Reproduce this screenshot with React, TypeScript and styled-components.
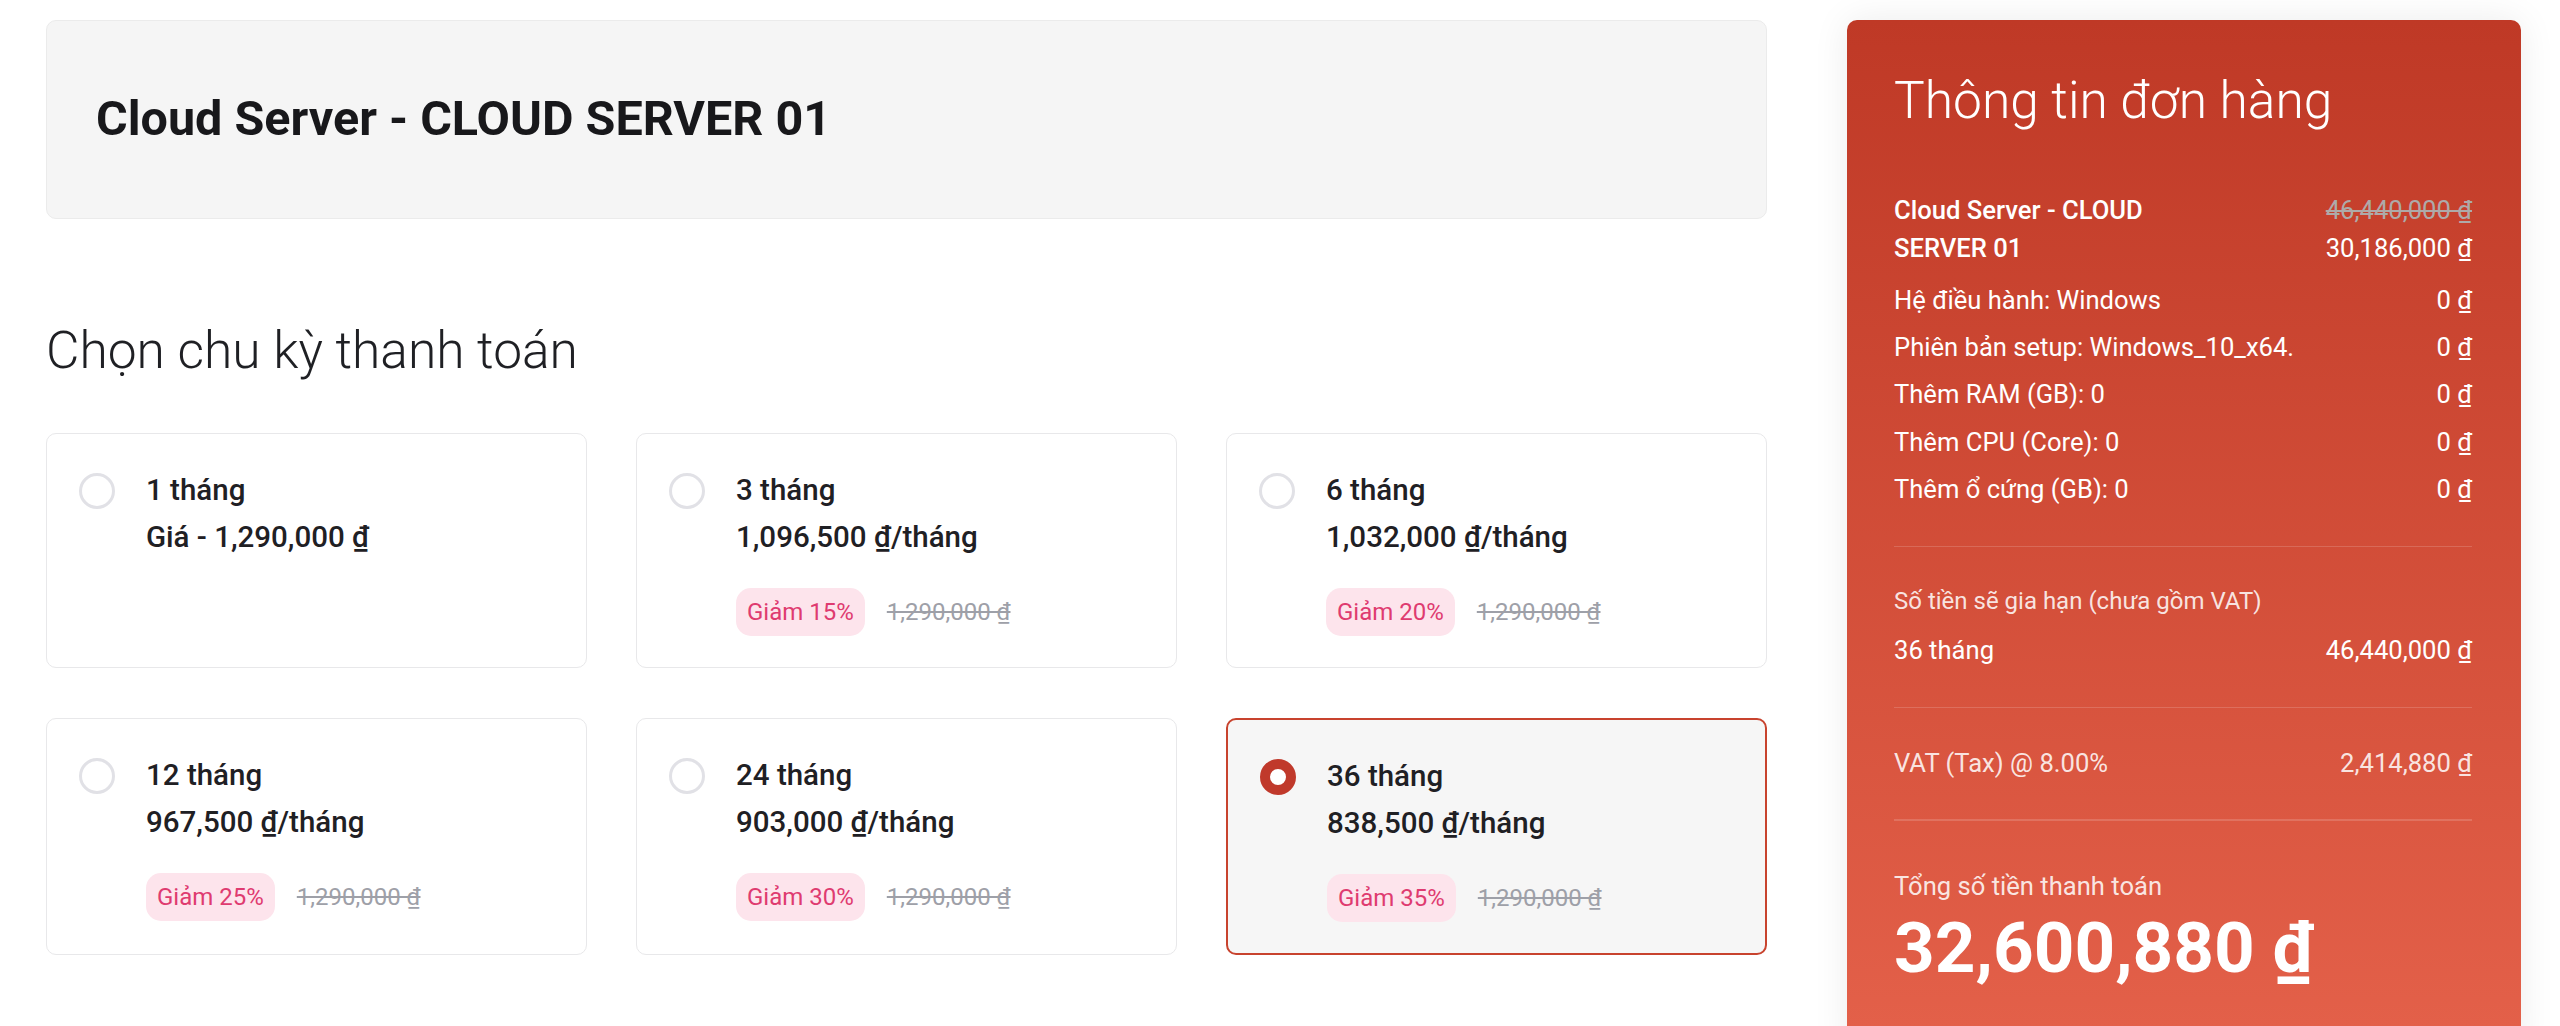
import React, { useState } from 'react';
import styled, { createGlobalStyle } from 'styled-components';

const GlobalStyle = createGlobalStyle`
  * { box-sizing: border-box; }
  body {
    margin: 0;
    background: #ffffff;
    font-family: Roboto, "Liberation Sans", Arial, sans-serif;
    color: #1f2024;
  }
`;

interface CycleOption {
  id: string;
  months: number;
  price: string;
  discount?: string;
}

const OPTIONS: CycleOption[] = [
  { id: '1', months: 1, price: 'Giá - 1,290,000 ₫' },
  { id: '3', months: 3, price: '1,096,500 ₫/tháng', discount: 'Giảm 15%' },
  { id: '6', months: 6, price: '1,032,000 ₫/tháng', discount: 'Giảm 20%' },
  { id: '12', months: 12, price: '967,500 ₫/tháng', discount: 'Giảm 25%' },
  { id: '24', months: 24, price: '903,000 ₫/tháng', discount: 'Giảm 30%' },
  { id: '36', months: 36, price: '838,500 ₫/tháng', discount: 'Giảm 35%' },
];

const ORDER_ITEMS = [
  { label: 'Hệ điều hành: Windows', amount: '0 ₫' },
  { label: 'Phiên bản setup: Windows_10_x64.', amount: '0 ₫' },
  { label: 'Thêm RAM (GB): 0', amount: '0 ₫' },
  { label: 'Thêm CPU (Core): 0', amount: '0 ₫' },
  { label: 'Thêm ổ cứng (GB): 0', amount: '0 ₫' },
];

const Page = styled.div`
  display: flex;
  align-items: flex-start;
  gap: 80px;
  padding: 20px 39px 0 46px;
`;

const Main = styled.div`
  flex: 1;
  min-width: 0;
`;

const TitleCard = styled.div`
  display: flex;
  align-items: center;
  height: 199px;
  padding: 0 49px;
  background: #f5f5f5;
  border: 1.5px solid #ebebeb;
  border-radius: 10px;
`;

const Title = styled.h1`
  margin: 0;
  font-size: 48.5px;
  font-weight: 700;
  line-height: 1.2;
  color: #18181b;
`;

const SectionHeading = styled.h2`
  margin: 101px 0 51px;
  font-size: 51.5px;
  font-weight: 300;
  line-height: 1.2;
  color: #1f2024;
`;

const OptionGrid = styled.div`
  display: grid;
  grid-template-columns: repeat(3, 1fr);
  column-gap: 49px;
  row-gap: 50px;
`;

const OptionCard = styled.label<{ $active: boolean }>`
  display: flex;
  align-items: flex-start;
  gap: 31px;
  padding: 33px 32px 31px;
  border-radius: 10px;
  cursor: pointer;
  background: ${p => (p.$active ? '#f6f6f6' : '#ffffff')};
  border: ${p => (p.$active ? '2px solid #c8432e' : '1.5px solid #e8e8ea')};
`;

const Radio = styled.span<{ $active: boolean }>`
  flex: none;
  width: 36px;
  height: 36px;
  margin-top: 6px;
  border-radius: 50%;
  background: #ffffff;
  border: ${p => (p.$active ? '10px solid #c0392b' : '3px solid #e1e1e6')};
`;

const OptionBody = styled.div`
  display: flex;
  flex-direction: column;
`;

const OptionLine = styled.div`
  font-size: 29.5px;
  font-weight: 500;
  line-height: 47px;
  color: #1f2024;
`;

const DiscountRow = styled.div`
  display: flex;
  align-items: center;
  gap: 22px;
  margin-top: 27px;
`;

const Badge = styled.span`
  padding: 7px 11px;
  border-radius: 15px;
  background: #fde4ec;
  color: #df3b70;
  font-size: 24px;
  font-weight: 400;
  line-height: 34px;
`;

const OldPrice = styled.span`
  font-size: 24px;
  color: #9ea0a8;
  text-decoration: line-through;
`;

const Summary = styled.aside`
  flex: none;
  width: 674px;
  padding: 50px 49px 64px 47px;
  border-radius: 10px;
  background: linear-gradient(180deg, #bf3926 0%, #e4614a 100%);
  box-shadow: 0 0 36px rgba(0, 0, 0, 0.08);
  color: #ffffff;
`;

const SummaryTitle = styled.h2`
  margin: 0 0 59px;
  font-size: 51.5px;
  font-weight: 300;
  line-height: 1.2;
`;

const RowList = styled.div`
  display: flex;
  flex-direction: column;
  gap: 9px;
`;

const Row = styled.div<{ $muted?: boolean }>`
  display: flex;
  justify-content: space-between;
  gap: 20px;
  font-size: 25.6px;
  line-height: 38.4px;
  color: ${p => (p.$muted ? 'rgba(255, 255, 255, 0.86)' : '#ffffff')};
`;

const ProductName = styled.span`
  max-width: 345px;
  font-weight: 500;
`;

const PriceStack = styled.span`
  display: flex;
  flex-direction: column;
  align-items: flex-end;
  margin-bottom: 4px;
`;

const StruckPrice = styled.span`
  color: #aeaaa9;
  text-decoration: line-through;
`;

const Divider = styled.hr<{ $top: number; $bottom: number }>`
  margin: ${p => `${p.$top}px 0 ${p.$bottom}px`};
  border: 0;
  height: 1.5px;
  background: rgba(255, 255, 255, 0.16);
`;

const SmallLabel = styled.div`
  margin-bottom: 12px;
  font-size: 24px;
  line-height: 36px;
  color: rgba(255, 255, 255, 0.86);
`;

const TotalLabel = styled.div`
  font-size: 25.6px;
  line-height: 38.4px;
  color: rgba(255, 255, 255, 0.86);
`;

const TotalAmount = styled.div`
  font-size: 71px;
  font-weight: 700;
  line-height: 1.2;
`;

const App: React.FC = () => {
  const [selected, setSelected] = useState('36');

  return (
    <>
      <GlobalStyle />
      <Page>
        <Main>
          <TitleCard>
            <Title>Cloud Server - CLOUD SERVER 01</Title>
          </TitleCard>

          <SectionHeading>Chọn chu kỳ thanh toán</SectionHeading>

          <OptionGrid>
            {OPTIONS.map(opt => {
              const active = opt.id === selected;
              return (
                <OptionCard key={opt.id} $active={active} onClick={() => setSelected(opt.id)}>
                  <Radio $active={active} />
                  <OptionBody>
                    <OptionLine>{opt.months} tháng</OptionLine>
                    <OptionLine>{opt.price}</OptionLine>
                    {opt.discount && (
                      <DiscountRow>
                        <Badge>{opt.discount}</Badge>
                        <OldPrice>1,290,000 ₫</OldPrice>
                      </DiscountRow>
                    )}
                  </OptionBody>
                </OptionCard>
              );
            })}
          </OptionGrid>
        </Main>

        <Summary>
          <SummaryTitle>Thông tin đơn hàng</SummaryTitle>

          <RowList>
            <Row>
              <ProductName>Cloud Server - CLOUD SERVER 01</ProductName>
              <PriceStack>
                <StruckPrice>46,440,000 ₫</StruckPrice>
                <span>30,186,000 ₫</span>
              </PriceStack>
            </Row>
            {ORDER_ITEMS.map(item => (
              <Row key={item.label}>
                <span>{item.label}</span>
                <span>{item.amount}</span>
              </Row>
            ))}
          </RowList>

          <Divider $top={37} $bottom={36} />

          <SmallLabel>Số tiền sẽ gia hạn (chưa gồm VAT)</SmallLabel>
          <Row>
            <span>36 tháng</span>
            <span>46,440,000 ₫</span>
          </Row>

          <Divider $top={37} $bottom={36} />

          <Row $muted>
            <span>VAT (Tax) @ 8.00%</span>
            <span>2,414,880 ₫</span>
          </Row>

          <Divider $top={37} $bottom={46} />

          <TotalLabel>Tổng số tiền thanh toán</TotalLabel>
          <TotalAmount>32,600,880 ₫</TotalAmount>
        </Summary>
      </Page>
    </>
  );
};

export default App;
